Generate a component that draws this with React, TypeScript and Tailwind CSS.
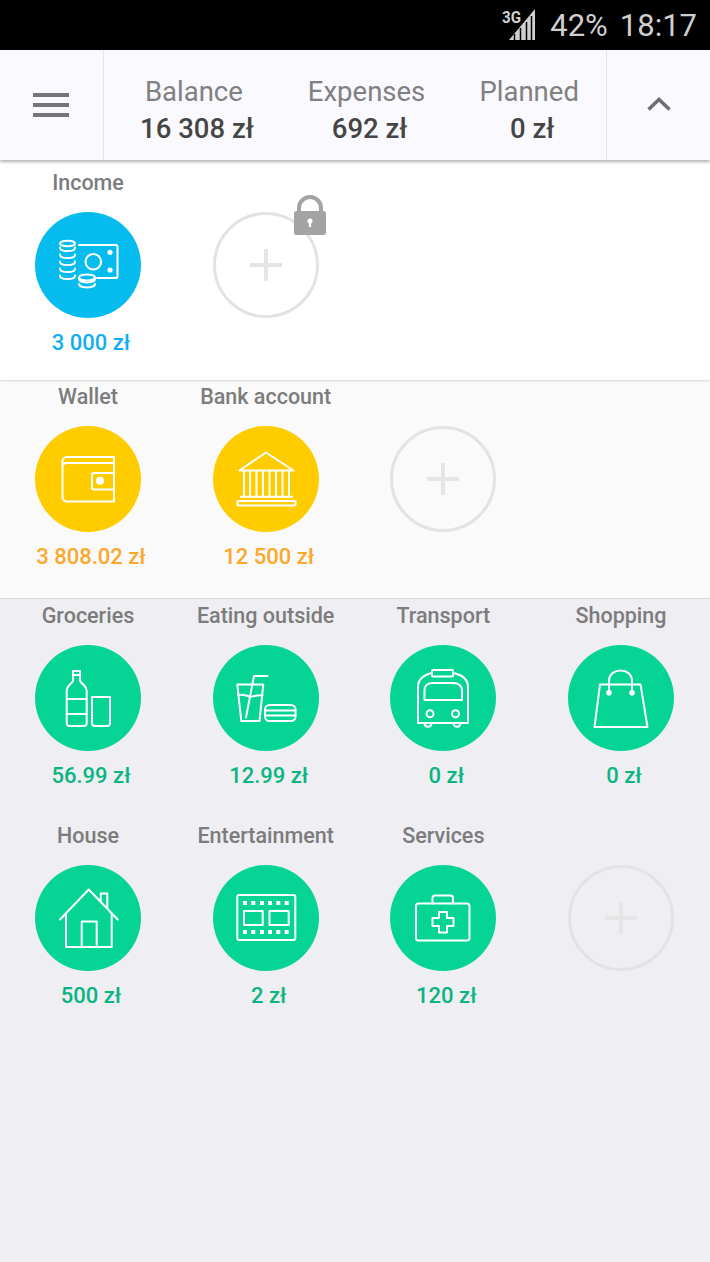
import React from "react";

const S = ({ children }: { children: React.ReactNode }) => (
  <svg viewBox="0 0 106 106" width={106} height={106} fill="none" stroke="#fff" strokeWidth={2} strokeLinejoin="round" strokeLinecap="round">
    {children}
  </svg>
);

const IncomeIcon = () => (
  <S>
    <ellipse cx={32.500} cy={31.500} rx={7.500} ry={2.800} />
    {[38, 45, 52, 59, 66].map((y) => (
      <path key={y} d={`M25 ${y - 2.500}c0 2 3 3.600 7.500 3.600s7.500-1.600 7.500-3.600`} />
    ))}
    <path d="M44 33h36.500a2 2 0 0 1 2 2v29a2 2 0 0 1-2 2H62" />
    <circle cx={58.300} cy={49.700} r={7.800} />
    <circle cx={75} cy={40.300} r={1.600} fill="#fff" />
    <circle cx={75} cy={58} r={1.600} fill="#fff" />
    <ellipse cx={52} cy={65.500} rx={8} ry={3} />
    <path d="M44 67c0 2 3.500 3.400 8 3.400s8-1.400 8-3.400M44 72c0 2 3.500 3.400 8 3.400s8-1.400 8-3.400" />
  </S>
);
const WalletIcon = () => (
  <S>
    <path d="M79 31H32a4.500 4.500 0 0 0-4.500 4.500V71a4.500 4.500 0 0 0 4.500 4.500h47z" />
    <path d="M79 37H32a4.500 4.500 0 0 0-4.500 3" />
    <path d="M79 47H59a2 2 0 0 0-2 2v12.500a2 2 0 0 0 2 2h20" />
    <circle cx={65} cy={54.800} r={4} fill="#fff" stroke="none" />
  </S>
);
const BankIcon = () => (
  <S>
    <path d="M53 26.500 26.500 44.500h54z" />
    <path d="M31 45v25.500M37 45v25.500M43.500 45v25.500M50 45v25.500M56.500 45v25.500M63 45v25.500M69.500 45v25.500M76 45v25.500" />
    <path d="M28 70.700h51" />
    <rect x={24.500} y={75} width={58} height={4.500} rx={0.800} />
  </S>
);
const BottleIcon = () => (
  <S>
    <path d="M38 26h7v9.500c0 3 6.700 4 6.700 11V78a3 3 0 0 1-3 3H34.700a3 3 0 0 1-3-3V46.500c0-7 6.300-8 6.300-11z" />
    <path d="M38 30h7M31.700 54h20M31.700 69h20" />
    <path d="M57 52h18v26a3 3 0 0 1-3 3H60a3 3 0 0 1-3-3z" />
  </S>
);
const FoodIcon = () => (
  <S>
    <path d="M24.300 39.500h26L46.500 76H28.300z" />
    <path d="M25.500 50c6-1.500 10 2.500 14 1.500s6-2 10-1" />
    <path d="M33 72.500 41 31h13.500" />
    <rect x={52} y={60} width={30.500} height={16} rx={4.500} />
    <path d="M52 65.500h30.500M52 70.500h30.500" />
  </S>
);
const BusIcon = () => (
  <S>
    <rect x={42} y={25} width={21} height={6.500} rx={1} />
    <path d="M42 28c-9 2-14 7-14 14v36h50V42c0-7-5-12-15-14" />
    <path d="M34.500 55V45c0-4 3-7 8-7h21c5 0 8.500 3 8.500 7v10z" />
    <circle cx={40} cy={68.700} r={3.500} />
    <circle cx={65.500} cy={68.700} r={3.500} />
    <path d="M34.500 78c0 5 7 5 7 0M63.500 78c0 5 7 5 7 0" />
  </S>
);
const BagIcon = () => (
  <S>
    <path d="M32 39.500h40.500L79.500 82h-53z" />
    <path d="M41 47.500V36c0-14 23-14 23 0v11.500" />
    <circle cx={41} cy={47.700} r={2.800} fill="#fff" stroke="none" />
    <circle cx={64} cy={47.700} r={2.800} fill="#fff" stroke="none" />
  </S>
);
const HouseIcon = () => (
  <S>
    <path d="M25 54.500 53.700 24.500 82.700 54.500" />
    <path d="M31 48.500V82h45.700V48.500" />
    <path d="M46.700 82V56.500h15V82" />
    <path d="M65.700 36V28.500h6.600V43" />
  </S>
);
const FilmIcon = () => (
  <S>
    <rect x={24.300} y={30} width={58} height={45} rx={2} />
    <rect x={31} y={46} width={18.700} height={14} />
    <rect x={56.500} y={46} width={19.200} height={14} />
    {[32, 40.300, 49, 57, 65.300, 73.700].map((x) => (
      <React.Fragment key={x}>
        <rect x={x - 2} y={36} width={4} height={4} fill="#fff" stroke="none" />
        <rect x={x - 2} y={65} width={4} height={4} fill="#fff" stroke="none" />
      </React.Fragment>
    ))}
  </S>
);
const MedIcon = () => (
  <S>
    <rect x={26} y={38.500} width={53.500} height={37} rx={2.500} />
    <path d="M42.500 38.500V33a2.500 2.500 0 0 1 2.500-2.500h15.500A2.500 2.500 0 0 1 63 33v5.500" />
    <path d="M49 47h8v6h6.500v8H57v6.500h-8V61h-6.500v-8H49z" />
  </S>
);

const Lock = () => (
  <svg viewBox="0 0 34 40" width={34} height={40} className="absolute top-[-20px] left-[77px]">
    <path d="M6 18v-5a11 11 0 0 1 22 0v5" fill="none" stroke="#a3a3a3" strokeWidth={4} />
    <rect x={1} y={16} width={32} height={24} rx={2.500} fill="#a3a3a3" />
    <circle cx={17} cy={26} r={2.500} fill="#fff" />
    <rect x={15.800} y={26} width={2.400} height={6} fill="#fff" />
  </svg>
);

type CellProps = {
  label: string;
  amount?: string;
  circle?: string;
  amountColor?: string;
  icon?: React.ReactNode;
  add?: boolean;
  locked?: boolean;
};

const Cell = ({ label, amount, circle, amountColor, icon, add, locked }: CellProps) => (
  <div className="flex w-[106px] flex-col items-center">
    <div className="h-[22px] whitespace-nowrap text-[21.5px] font-medium leading-[24px] text-[#7c7c7c]">{label}</div>
    {add ? (
      <div className="relative mt-[19px] flex h-[106px] w-[106px] items-center justify-center rounded-full border-[3px] border-[#e3e3e3]">
        <div className="relative h-[32px] w-[32px]">
          <div className="absolute left-0 top-[14px] h-[4px] w-[32px] bg-[#e5e5e5]" />
          <div className="absolute left-[14px] top-0 h-[32px] w-[4px] bg-[#e5e5e5]" />
        </div>
        {locked && <Lock />}
      </div>
    ) : (
      <div className={`mt-[19px] flex h-[106px] w-[106px] items-center justify-center rounded-full ${circle}`}>{icon}</div>
    )}
    {amount && (
      <div className={`mt-[12px] h-[24px] whitespace-nowrap pl-[6px] text-[22px] font-medium leading-[26px] ${amountColor}`}>{amount}</div>
    )}
  </div>
);

const Stat = ({ label, value }: { label: string; value: string }) => (
  <div className="flex flex-col items-center">
    <div className="text-[27.5px] leading-[37px] text-[#808080]">{label}</div>
    <div className="pl-[6px] text-[27.5px] font-medium leading-[37px] text-[#454545]">{value}</div>
  </div>
);

const blue = "text-[#12aef2]";
const orange = "text-[#fba82c]";
const green = "text-[#0ab582]";
const G = "bg-[#06d494]";
const Y = "bg-[#ffcc00]";
const row = "flex gap-[71.67px] px-[35px]";

export default function App() {
  return (
    <div className="flex h-[1262px] w-[710px] flex-col overflow-hidden bg-[#eeeef3] font-['Roboto',sans-serif]">
      <div className="flex h-[50px] shrink-0 items-center justify-end bg-black pr-[13px] text-[31px] leading-none text-[#cfcfcf]">
        <svg viewBox="-7 0 41 32" width={41} height={32} className="mr-[8px] mt-[-1px]">
          <path d="M27 0v31H1z" fill="#cfcfcf" />
          <path d="M6.500 31V25M12.500 31V19M18.500 31V13M23.500 31V7" stroke="#000" strokeWidth={1.500} />
          <text x={-6} y={14} fontSize={16} fontWeight={700} fill="#cfcfcf" stroke="#000" strokeWidth={0.600} paintOrder="stroke" fontFamily="Roboto" textLength={19} lengthAdjust="spacingAndGlyphs">3G</text>
        </svg>
        <span className="mr-[12px]">42%</span>
        <span>18:17</span>
      </div>

      <div className="z-20 flex h-[110px] shrink-0 bg-[#f9f9fe] shadow-[0_2px_3px_rgba(0,0,0,0.3)]">
        <div className="flex w-[104px] shrink-0 items-center justify-center border-r border-[#e6e6ea] pr-[2px]">
          <div className="flex w-[36px] flex-col gap-[6px]">
            <div className="h-[4px] bg-[#757575]" />
            <div className="h-[4px] bg-[#757575]" />
            <div className="h-[4px] bg-[#757575]" />
          </div>
        </div>
        <div className="flex flex-1 items-center justify-around pl-[3px] pt-[9px]">
          <Stat label="Balance" value="16 308 zł" />
          <Stat label="Expenses" value="692 zł" />
          <Stat label="Planned" value="0 zł" />
        </div>
        <div className="flex w-[104px] shrink-0 items-center justify-center border-l border-[#e6e6ea]">
          <svg viewBox="0 0 24 14" width={24} height={14} fill="none" stroke="#707070" strokeWidth={3.500} className="mt-[-2px]">
            <path d="M1.500 12.500 12 2.500l10.500 10" />
          </svg>
        </div>
      </div>

      <section className="z-10 flex h-[220px] shrink-0 flex-col bg-white pt-[11px] shadow-[0_1px_2px_rgba(0,0,0,0.15)]">
        <div className={row}>
          <Cell label="Income" amount="3 000 zł" circle="bg-[#06bcef]" amountColor={blue} icon={<IncomeIcon />} />
          <Cell label="" add locked />
        </div>
      </section>

      <section className="z-[5] flex h-[219px] shrink-0 flex-col border-b border-[#d9d9dc] bg-[#fafafa] pt-[5px]">
        <div className={row}>
          <Cell label="Wallet" amount="3 808.02 zł" circle={Y} amountColor={orange} icon={<WalletIcon />} />
          <Cell label="Bank account" amount="12 500 zł" circle={Y} amountColor={orange} icon={<BankIcon />} />
          <Cell label="" add />
        </div>
      </section>

      <section className="flex flex-col gap-[37px] pt-[5px]">
        <div className={row}>
          <Cell label="Groceries" amount="56.99 zł" circle={G} amountColor={green} icon={<BottleIcon />} />
          <Cell label="Eating outside" amount="12.99 zł" circle={G} amountColor={green} icon={<FoodIcon />} />
          <Cell label="Transport" amount="0 zł" circle={G} amountColor={green} icon={<BusIcon />} />
          <Cell label="Shopping" amount="0 zł" circle={G} amountColor={green} icon={<BagIcon />} />
        </div>
        <div className={row}>
          <Cell label="House" amount="500 zł" circle={G} amountColor={green} icon={<HouseIcon />} />
          <Cell label="Entertainment" amount="2 zł" circle={G} amountColor={green} icon={<FilmIcon />} />
          <Cell label="Services" amount="120 zł" circle={G} amountColor={green} icon={<MedIcon />} />
          <Cell label="" add />
        </div>
      </section>
    </div>
  );
}
